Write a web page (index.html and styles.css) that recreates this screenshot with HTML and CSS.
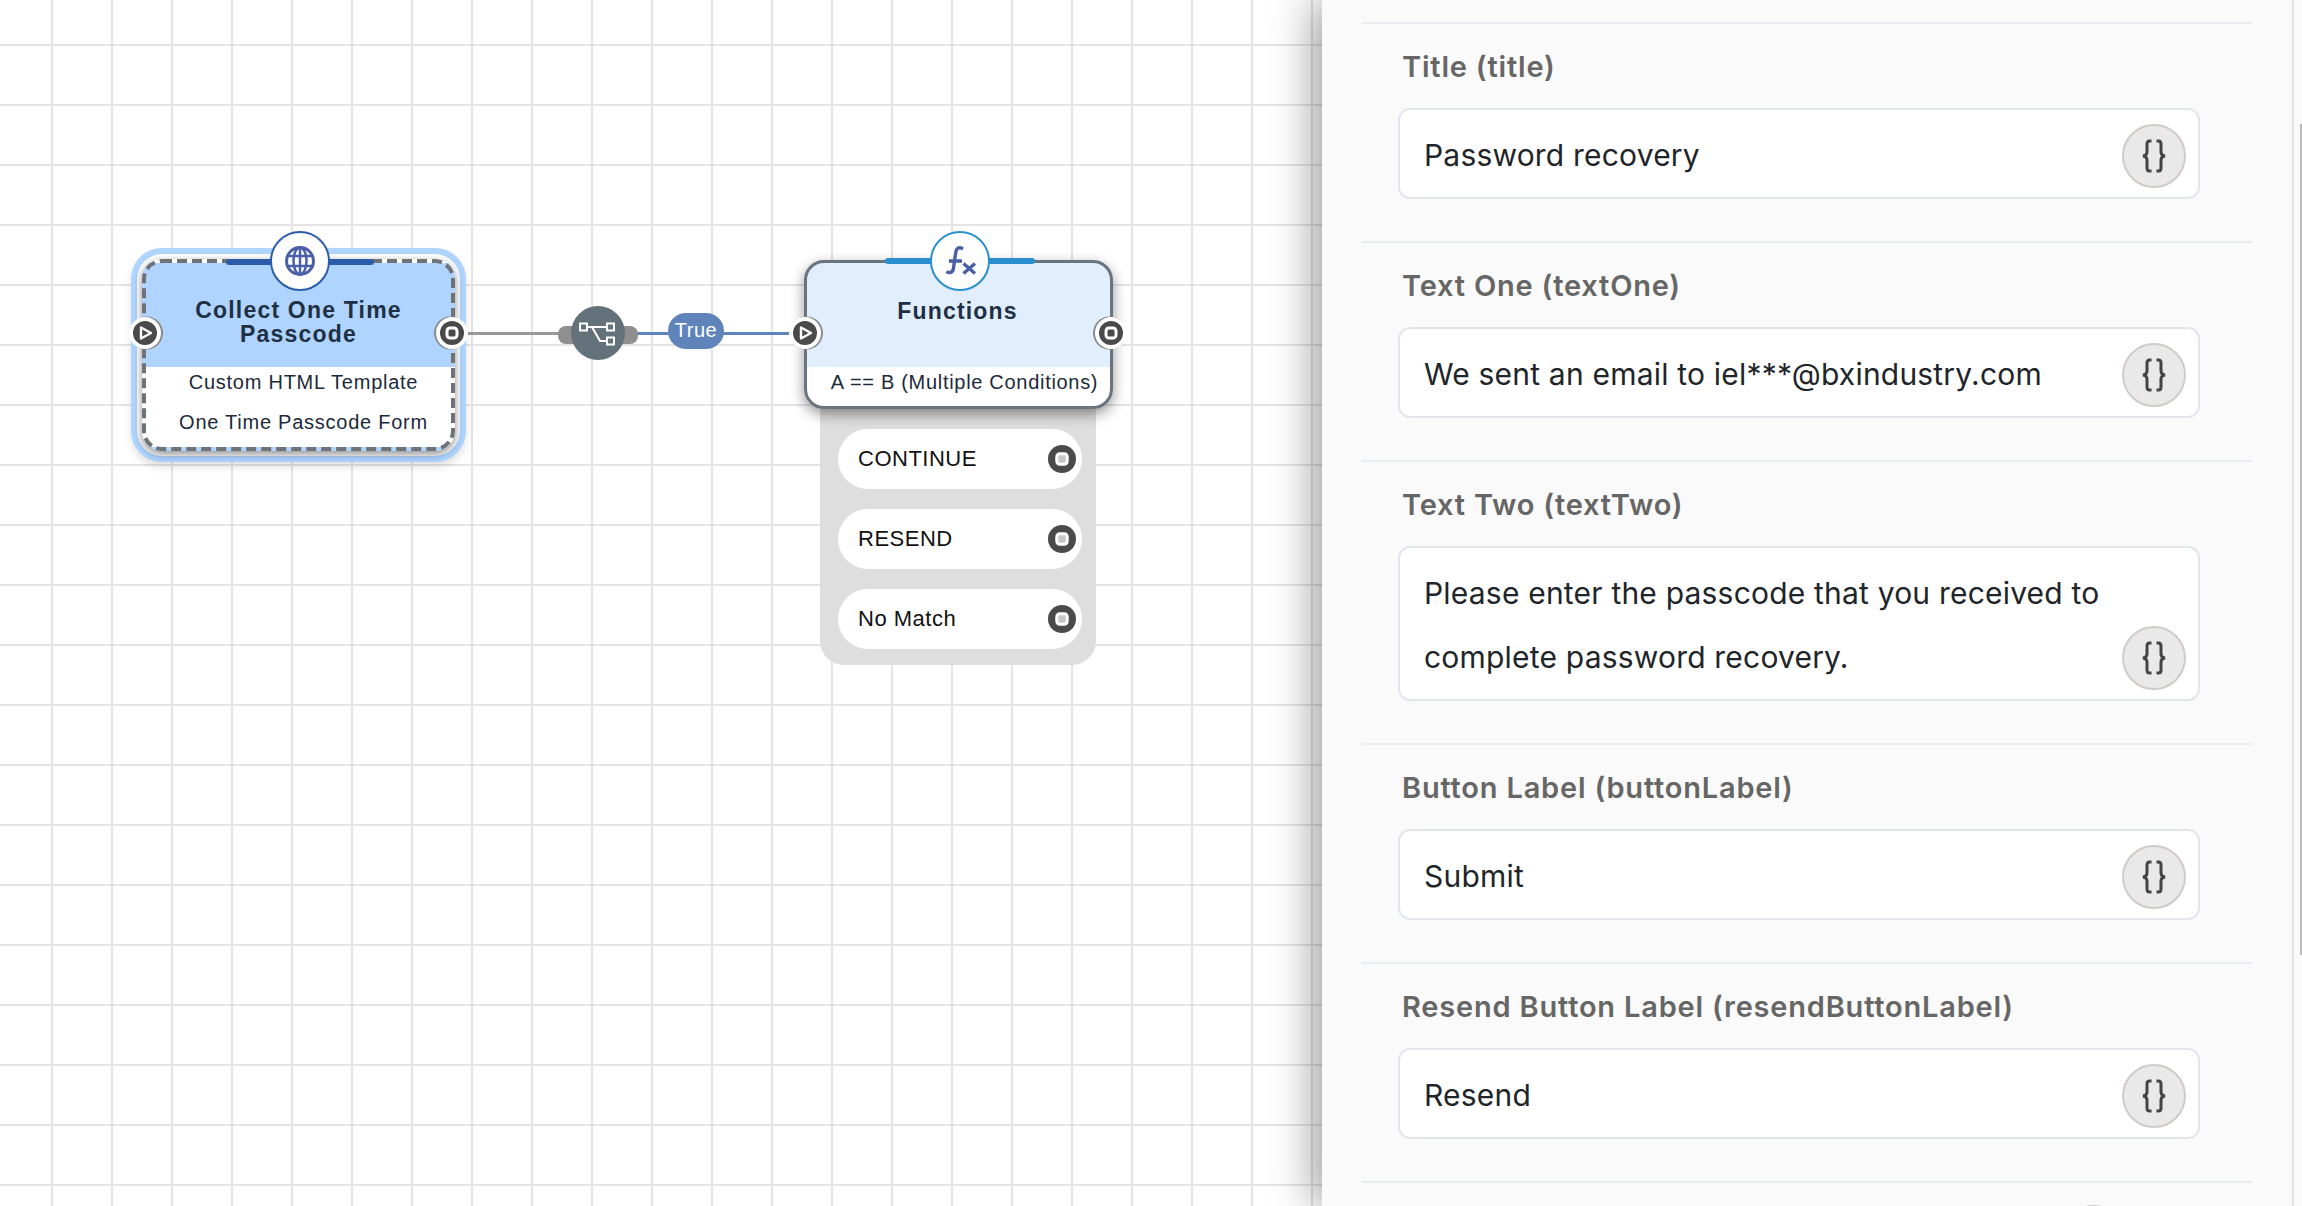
FILE: index.html
```html
<!DOCTYPE html>
<html lang="en">
<head>
<meta charset="utf-8">
<title>Flow editor</title>
<link rel="stylesheet" href="styles.css">
</head>
<body>
<svg class="sprite" aria-hidden="true">
  <symbol id="play" viewBox="0 0 24 24"><path d="M8 6.500 18 12 8 17.500Z" fill="none" stroke="#fff" stroke-width="2.400" stroke-linejoin="round"/></symbol>
  <symbol id="stop" viewBox="0 0 24 24"><rect x="7" y="7" width="10" height="10" rx="3" fill="#4a4a4a" stroke="#fff" stroke-width="3"/></symbol>
  <symbol id="stop-light" viewBox="0 0 24 24"><rect x="7.500" y="7.500" width="9" height="9" rx="2.500" fill="#c8c8c8" stroke="#fff" stroke-width="2.500"/></symbol>
  <symbol id="braces" viewBox="0 0 26 34"><path d="M10.500 2H8.500Q6 2 6 5V13Q6 16.400 2 17 6 17.600 6 21V29Q6 32 8.500 32H10.500M15.500 2H17.500Q20 2 20 5V13Q20 16.400 24 17 20 17.600 20 21V29Q20 32 17.500 32H15.500" fill="none" stroke="#444" stroke-width="3"/></symbol>
</svg>
<div class="app">
  <main class="canvas">
    <div class="edge edge-gray"></div>
    <div class="edge edge-blue"></div>
    <div class="hub-caps"></div>
    <div class="hub">
      <svg width="54" height="54" viewBox="0 0 54 54"><path d="M16 21H36M21 21 29 35H36" fill="none" stroke="#fff" stroke-width="2"/><path d="M9 17.500h7v7H9zM36 17.500h7v7h-7zM36 31.500h7v7h-7z" fill="#63727a" stroke="#fff" stroke-width="2"/></svg>
    </div>
    <div class="edge-label">True</div>

    <section class="node node-selected">
      <svg class="dash" width="313" height="192"><rect x="2" y="2" width="309" height="188" rx="18" fill="none" stroke="#6e7379" stroke-width="4" stroke-dasharray="10 5"/></svg>
      <span class="bar bar-dark"></span>
      <span class="badge badge-dark">
        <svg width="34" height="34" viewBox="0 0 34 34"><g fill="none" stroke="#4a5fa8"><circle cx="17" cy="17" r="13.500" stroke-width="3"/><ellipse cx="17" cy="17" rx="6.500" ry="13.500" stroke-width="2.500"/><path d="M17 3.500V30.500M5 12H29M5 22H29" stroke-width="2.500"/></g></svg>
      </span>
      <span class="port port-in"><svg width="24" height="24"><use href="#play"/></svg></span>
      <span class="port port-out"><svg width="24" height="24"><use href="#stop"/></svg></span>
      <h2 class="node-title">Collect One Time<br>Passcode</h2>
      <p class="node-sub">Custom HTML Template</p>
      <p class="node-sub node-sub-last">One Time Passcode Form</p>
    </section>

    <div class="tray">
      <div class="choice"><span>CONTINUE</span><span class="mini-port"><svg width="28" height="28"><use href="#stop-light"/></svg></span></div>
      <div class="choice"><span>RESEND</span><span class="mini-port"><svg width="28" height="28"><use href="#stop-light"/></svg></span></div>
      <div class="choice"><span>No Match</span><span class="mini-port"><svg width="28" height="28"><use href="#stop-light"/></svg></span></div>
    </div>

    <section class="node node-func">
      <span class="bar bar-light"></span>
      <span class="badge badge-light">
        <svg width="56" height="56" viewBox="2 2 56 56"><path d="M33 18C28 15 26 18 25.500 23L23.500 37C23 42 19 42.500 16.500 40.500M19 30H32M33.500 32.500 45 42.500M45 32.500 33.500 42.500" fill="none" stroke="#4a5fa8" stroke-width="3.400"/></svg>
      </span>
      <span class="port port-in"><svg width="24" height="24"><use href="#play"/></svg></span>
      <span class="port port-out"><svg width="24" height="24"><use href="#stop"/></svg></span>
      <h2 class="node-title node-title-single">Functions</h2>
      <p class="node-sub">A == B (Multiple Conditions)</p>
    </section>
  </main>

  <aside class="panel">
    <form class="form">
      <div class="row">
        <label class="label">Title (title)</label>
        <div class="input"><div class="value">Password recovery</div><button type="button" class="var-btn"><svg width="26" height="34"><use href="#braces"/></svg></button></div>
      </div>
      <div class="row">
        <label class="label">Text One (textOne)</label>
        <div class="input"><div class="value">We sent an email to iel***@bxindustry.com</div><button type="button" class="var-btn"><svg width="26" height="34"><use href="#braces"/></svg></button></div>
      </div>
      <div class="row">
        <label class="label">Text Two (textTwo)</label>
        <div class="input"><div class="value">Please enter the passcode that you received to<br>complete password recovery.</div><button type="button" class="var-btn"><svg width="26" height="34"><use href="#braces"/></svg></button></div>
      </div>
      <div class="row">
        <label class="label">Button Label (buttonLabel)</label>
        <div class="input"><div class="value">Submit</div><button type="button" class="var-btn"><svg width="26" height="34"><use href="#braces"/></svg></button></div>
      </div>
      <div class="row">
        <label class="label">Resend Button Label (resendButtonLabel)</label>
        <div class="input"><div class="value">Resend</div><button type="button" class="var-btn"><svg width="26" height="34"><use href="#braces"/></svg></button></div>
      </div>
      <div class="row row-tail"><span class="tail-btn"></span></div>
    </form>
    <div class="track"><div class="thumb"></div></div>
  </aside>
</div>
</body>
</html>
```
FILE: styles.css
```css
* { box-sizing: border-box; }
html, body { margin: 0; height: 100%; overflow: hidden; }
.sprite { display: none; }
.app { display: flex; width: 2302px; height: 1206px; overflow: hidden; }

/* canvas */
.canvas {
  position: relative;
  flex: 0 0 1322px;
  background-color: #fff;
  background-image:
    linear-gradient(to right, #e4e4e4 2px, transparent 2px),
    linear-gradient(to bottom, #e4e4e4 2px, transparent 2px);
  background-size: 60px 60px;
  background-position: 51px 44px;
  font-family: "Liberation Sans", Arial, sans-serif;
}
.edge { position: absolute; height: 3px; top: 332px; }
.edge-gray { left: 466px; width: 100px; background: #999; }
.edge-blue { left: 630px; width: 160px; background: #5f84bc; }
.hub-caps { position: absolute; left: 558px; top: 326px; width: 80px; height: 18px; border-radius: 8px; background: #8f8f8f; }
.hub { position: absolute; left: 571px; top: 306px; width: 54px; height: 54px; border-radius: 50%; background: #63727a; }
.hub svg { display: block; }
.edge-label {
  position: absolute; left: 668px; top: 313px; width: 56px; height: 36px;
  border-radius: 18px; background: #5f84bc; color: #fff;
  font-size: 20px; line-height: 34px; text-align: center; letter-spacing: .5px;
}

/* nodes */
.node { position: absolute; top: 259px; margin: 0; color: #1c2a3a; }
.node-selected {
  left: 142px; width: 313px; height: 192px;
  border: 4px solid transparent; border-radius: 20px;
  background: linear-gradient(#aed4ff 104px, #fff 104px);
  box-shadow: 0 3px 8px rgba(0,0,0,.45), 0 0 0 5px #fff, 0 0 0 11px #aed4ff, 0 5px 8px 11px rgba(0,0,0,.12);
}
.dash { position: absolute; left: -4px; top: -4px; }
.node-func {
  left: 804px; top: 260px; width: 309px; height: 149px;
  border: 3px solid #6a747e; border-radius: 20px;
  background: linear-gradient(#e0eefe 104px, #fff 104px);
  box-shadow: 0 5px 14px rgba(0,0,0,.42);
}
.node-title {
  position: relative; margin: 0; padding-top: 35px; height: 103px;
  font-size: 23px; line-height: 24px; font-weight: 700; letter-spacing: 1.200px;
  text-align: center; color: #1f3044;
}
.node-title-single { padding: 36px 2px 0 0; }
.node-sub {
  margin: 0; padding-left: 10px; height: 32px;
  font-size: 20px; line-height: 32px; letter-spacing: .75px; text-align: center; white-space: nowrap;
}
.node-sub-last { margin-top: 8px; }
.node-func .node-sub { padding-left: 12px; letter-spacing: .7px; }
.bar { position: absolute; top: -4px; height: 6px; border-radius: 3px; }
.bar-dark { left: 80px; width: 148px; background: #2a5daa; }
.bar-light { left: 78px; width: 150px; top: -5px; background: #2a8fcf; }
.badge {
  position: absolute; top: -32px; width: 60px; height: 60px; border-radius: 50%;
  background: #fff; display: flex; align-items: center; justify-content: center;
}
.badge-dark { left: 124px; border: 2px solid #2a5daa; }
.badge-light { left: 123px; top: -32px; border: 2px solid #2a8fcf; }
.port {
  position: absolute; top: 54px; width: 32px; height: 32px; border-radius: 50%;
  background: #4a4a4a; border: 4px solid #fff;
}
.port svg { display: block; }
.port-in { left: -17px; box-shadow: 1.500px 0 0 .5px #8a8a8a; }
.port-out { left: 290px; box-shadow: -1.500px 0 0 .5px #8a8a8a; }
.node-func .port-in { left: -18px; }
.node-func .port-out { left: 288px; }

/* choices */
.tray {
  position: absolute; left: 820px; top: 400px; width: 276px; height: 265px;
  padding: 29px 14px 0 18px; border-radius: 0 0 24px 24px; background: #dedede;
  display: flex; flex-direction: column; gap: 20px;
}
.choice {
  height: 60px; border-radius: 30px; background: #fff; padding: 0 6px 0 20px;
  display: flex; align-items: center; justify-content: space-between;
  font-size: 22px; letter-spacing: .5px; color: #111;
}
.mini-port { width: 28px; height: 28px; border-radius: 50%; background: #4a4a4a; }
.mini-port svg { display: block; }

/* panel */
.panel {
  position: relative; z-index: 2; flex: 0 0 980px; display: flex;
  background: #fafafa; box-shadow: -6px 0 42px rgba(0,0,0,.42);
  font-family: Inter, "Liberation Sans", sans-serif;
}
.form { flex: 0 0 970px; padding: 22px 40px 0; margin: 0; }
.row { border-top: 2px solid #e9edf2; padding: 24px 0 42px; }
.label {
  display: block; height: 36px; margin: 0 0 24px 40px;
  font-size: 29px; line-height: 37px; font-weight: 600; letter-spacing: .8px; color: #666;
}
.input {
  display: flex; align-items: flex-end; margin: 0 52px 0 36px; padding: 13px 12px 10px 24px;
  border: 2px solid #e2e6ec; border-radius: 12px; background: #fff;
}
.value { flex: 1; font-size: 30px; line-height: 64px; letter-spacing: .2px; color: #212529; white-space: nowrap; }
.var-btn {
  flex: none; width: 64px; height: 64px; padding: 0; margin-bottom: -1px; border-radius: 50%;
  border: 2px solid #d0cbc9; background: #e9e9e9;
  display: flex; align-items: center; justify-content: center;
}
.row-tail { display: flex; justify-content: flex-end; padding: 22px 127px 0 0; }
.tail-btn { width: 64px; height: 64px; border-radius: 50%; border: 2px solid #d0cbc9; background: #e9e9e9; flex: none; }
.track { flex: 0 0 10px; border-left: 2px solid #e5e5e5; display: flex; justify-content: flex-end; }
.thumb { width: 2px; height: 831px; margin-top: 124px; background: #bbb; }
```
